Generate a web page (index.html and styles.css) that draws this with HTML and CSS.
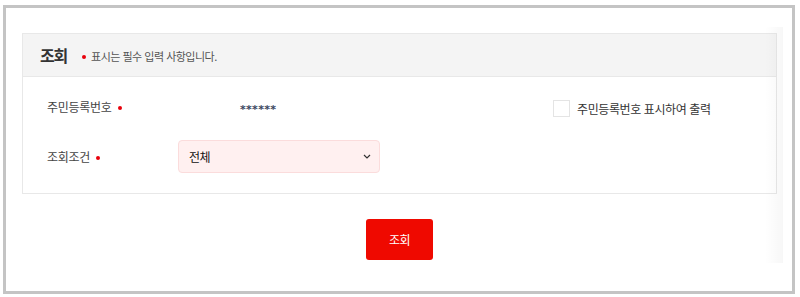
FILE: index.html
```html
<!DOCTYPE html>
<html lang="ko">
<head>
    <meta charset="UTF-8">
    <meta name="viewport" content="width=device-width, initial-scale=1.0">
    <title>조회</title>

    <link rel="stylesheet" href="styles.css">
</head>
<body>

    <div class="frame">
        <div class="panel">
            <div class="panel-head">
                <h2 class="title">조회</h2>
                <span class="dot"></span>
                <span class="notice">표시는 필수 입력 사항입니다.</span>
            </div>

            <div class="panel-body">
                <div class="row">
                    <div class="label">주민등록번호 <span class="dot"></span></div>
                    <div class="value">
                        <span class="masked">******</span>
                    </div>
                    <label class="check">
                        <span class="box"></span>
                        주민등록번호 표시하여 출력
                    </label>
                </div>
                <div class="row">
                    <div class="label">조회조건 <span class="dot"></span></div>
                    <div class="value">
                        <div class="select-wrap">
                            <select class="select">
                                <option>전체</option>
                            </select>
                            <svg class="chevron" width="8" height="5" viewBox="0 0 8 5">
                                <path d="M1 1 L4 4 L7 1" fill="none" stroke="#333" stroke-width="1.2"/>
                            </svg>
                        </div>
                    </div>
                </div>
            </div>
        </div>

        <div class="actions">
            <button class="btn">조회</button>
        </div>

        <div class="fade"></div>
    </div>

</body>
</html>
```

FILE: styles.css
```css
html, body {
    margin: 0;
    padding: 0;
    background-color: white;
    font-family: "Noto Sans CJK KR", "Noto Sans", sans-serif;
    color: #333;
}

.frame{
    position: relative;
    box-sizing: border-box;
    margin: 5px 0 0 3px;
    width: 792px;
    height: 289px;
    border: 3px solid #c4c4c4;
    padding: 25px 15px 0 16px;
}

.panel{
    border: 1px solid #e8e8e8;
    background-color: white;
}

.panel-head{
    display: flex;
    align-items: center;
    height: 42px;
    padding-left: 17px;
    background-color: #f4f4f4;
    border-bottom: 1px solid #e8e8e8;
}

.title{
    margin: 0;
    font-size: 16px;
    font-weight: bold;
    letter-spacing: -1.2px;
    color: #333;
}

.dot{
    display: inline-block;
    width: 4px;
    height: 4px;
    border-radius: 50%;
    background-color: #e8000b;
}

.panel-head .dot{
    margin: 4px 5px 0 15px;
}

.notice{
    font-size: 11px;
    letter-spacing: -0.5px;
    color: #555;
    padding-top: 2px;
}

.panel-body{
    padding: 13px 0 21px 24px;
}

.row{
    display: flex;
    align-items: center;
    height: 32px;
}

.row + .row{
    margin-top: 18px;
}

.label{
    width: 131px;
    font-size: 12px;
    letter-spacing: -0.3px;
    color: #444;
}

.label .dot{
    margin-left: 3px;
    vertical-align: 2px;
}

.value{
    width: 375px;
}

.masked{
    display: inline-block;
    margin-left: 62px;
    margin-top: -6px;
    font-family: "DejaVu Sans", sans-serif;
    font-size: 11px;
    font-weight: bold;
    letter-spacing: 0.3px;
    color: #3a4660;
}

.check{
    display: flex;
    align-items: center;
    gap: 7px;
    font-size: 12px;
    letter-spacing: -0.4px;
    color: #333;
    margin-top: 4px;
}

.box{
    display: inline-block;
    box-sizing: border-box;
    width: 17px;
    height: 17px;
    border: 1px solid #e4e4e4;
    background-color: white;
}

.select-wrap{
    position: relative;
    width: 202px;
}

.select{
    box-sizing: border-box;
    width: 202px;
    height: 33px;
    padding: 0 10px;
    border: 1px solid #fbdcdc;
    border-radius: 4px;
    background-color: #fff0f0;
    appearance: none;
    font-family: "Noto Sans CJK KR", sans-serif;
    font-size: 12px;
    letter-spacing: -0.5px;
    color: #111;
}

.chevron{
    position: absolute;
    right: 9px;
    top: 14px;
    pointer-events: none;
}

.actions{
    display: flex;
    justify-content: center;
    margin-top: 25px;
}

.btn{
    width: 67px;
    height: 41px;
    border: none;
    border-radius: 3px;
    background-color: #ef0900;
    color: white;
    font-family: "Noto Sans CJK KR", sans-serif;
    font-size: 12px;
    letter-spacing: -0.5px;
}

.fade{
    position: absolute;
    left: 759px;
    top: 19px;
    width: 18px;
    height: 236px;
    background: linear-gradient(to right, rgba(0,0,0,0), rgba(0,0,0,0.03));
    pointer-events: none;
}
```
